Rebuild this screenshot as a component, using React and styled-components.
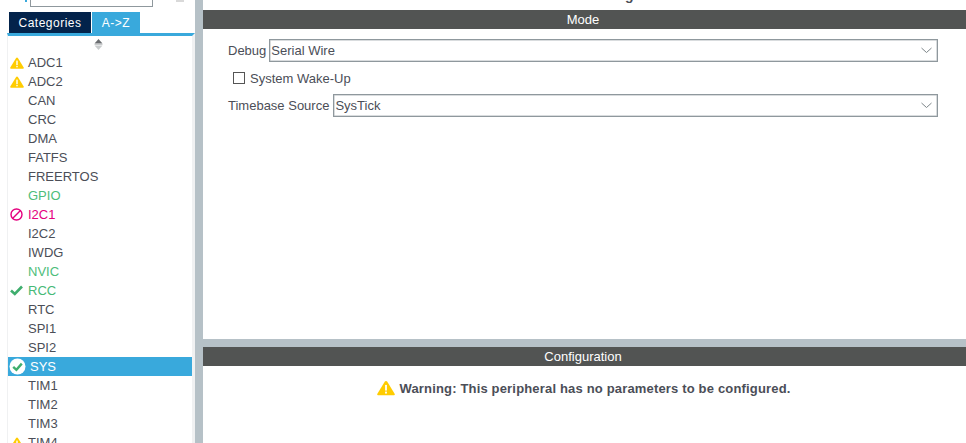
import React from "react"
import styled, { createGlobalStyle } from "styled-components"

const GlobalStyle = createGlobalStyle`
  html, body {
    margin: 0;
    padding: 0;
    background: #fff;
    overflow: hidden;
  }
  body {
    font-family: "Liberation Sans", Arial, sans-serif;
    font-size: 13px;
    color: #4b4e57;
  }
`

const Page = styled.div`
  display: grid;
  grid-template-columns: 195px 8px 1fr;
  width: 966px;
  height: 443px;
  overflow: hidden;
`

const Sidebar = styled.aside`
  display: flex;
  flex-direction: column;
  padding-left: 7px;
  overflow: hidden;
`

const SearchStrip = styled.div`
  display: flex;
  align-items: flex-end;
  flex: 0 0 7px;
  margin-left: -7px;
  overflow: hidden;
`

const SearchMark = styled.span`
  flex: 0 0 2px;
  height: 2px;
  margin: 0 3px 5px 25px;
  background: #39a9dc;
`

const SearchBox = styled.div`
  flex: 0 0 123px;
  height: 20px;
  box-sizing: border-box;
  border: 1px solid #8f989d;
`

const GearStub = styled.span`
  flex: 0 0 8px;
  height: 2px;
  margin: 0 0 5px 23px;
  background: #d9d9d9;
`

const Tabs = styled.div`
  display: flex;
  gap: 1px;
  margin: 5px 0 0 2px;
`

const Tab = styled.div`
  display: flex;
  align-items: center;
  justify-content: center;
  width: ${({ $active }) => ($active ? "48px" : "82px")};
  height: 21px;
  color: #fff;
  font-size: 12px;
  letter-spacing: 0.5px;
  background: ${({ $active }) => ($active ? "#39a9dc" : "#03234b")};
`

const ListBox = styled.div`
  flex: 1;
  min-height: 0;
  border-top: 3px solid #39a9dc;
  border-left: 1px solid #f0f1f2;
  border-right: 3px solid #f0f1f2;
  overflow: hidden;
`

const SortArrows = styled.div`
  display: flex;
  justify-content: center;
  height: 14px;
  padding-top: 3px;
  margin-left: -3px;
`

const List = styled.ul`
  list-style: none;
  margin: 0;
  padding: 0;
`

const stateColor = {
  warn: "#4b4e57",
  ok: "#46b976",
  error: "#e5007e",
  free: "#4dbd7a",
}

const Row = styled.li`
  display: flex;
  align-items: center;
  height: 19px;
  color: ${({ $selected, $state }) =>
    $selected ? "#fff" : stateColor[$state] || "#4b4e57"};
  background: ${({ $selected }) => ($selected ? "#39a9dc" : "transparent")};
`

const IconSlot = styled.span`
  display: flex;
  align-items: center;
  flex: 0 0 ${({ $selected }) => ($selected ? "22px" : "20px")};
  height: 19px;
  padding-left: ${({ $selected }) => ($selected ? "1px" : "2px")};
  box-sizing: border-box;
`

const Splitter = styled.div`
  background: #b6c1c7;
`

const Main = styled.main`
  display: flex;
  flex-direction: column;
  min-width: 0;
`

const TitleStrip = styled.div`
  display: flex;
  align-items: flex-end;
  justify-content: center;
  flex: 0 0 10px;
  overflow: hidden;
`

const Title = styled.div`
  flex: none;
  margin-bottom: 7px;
  font-size: 14px;
  font-weight: 700;
  line-height: 16px;
`

const SectionBar = styled.div`
  flex: 0 0 19px;
  box-sizing: border-box;
  padding: 1px 3px 0 0;
  color: #fff;
  font-size: 13px;
  line-height: 18px;
  text-align: center;
  background: #525453;
`

const ModePanel = styled.section`
  display: flex;
  flex-direction: column;
  flex: 0 0 310px;
  padding: 10px 28px 0 25px;
  box-sizing: border-box;
`

const FieldRow = styled.div`
  display: flex;
  align-items: center;
  gap: ${({ $gap }) => $gap}px;
  height: 23px;
`

const Select = styled.div`
  display: flex;
  align-items: center;
  justify-content: space-between;
  flex: 1;
  height: 23px;
  box-sizing: border-box;
  padding: 0 5px 0 1px;
  border: 1px solid #8f989d;
  box-shadow: inset 0 0 0 0.5px #b4babe;
`

const CheckRow = styled.label`
  display: flex;
  align-items: center;
  gap: 5px;
  height: 32px;
  padding-left: 5px;
`

const CheckBox = styled.span`
  flex: 0 0 12px;
  height: 12px;
  box-sizing: border-box;
  border: 1px solid #555;
`

const HorizontalSplit = styled.div`
  flex: 0 0 8px;
  background: #b6c1c7;
`

const Notice = styled.div`
  display: flex;
  align-items: center;
  justify-content: center;
  gap: 4px;
  height: 44px;
  padding-right: 1px;
  font-weight: 700;
  letter-spacing: 0.17px;
`

const WarnIcon = ({ size = 14 }) => (
  <svg width={size} height={size - 2} viewBox="0 0 14 12">
    <path
      d="M7 .5c.4 0 .7.2.9.5l5.8 9.4c.4.7 0 1.3-.8 1.3H1.1c-.8 0-1.2-.6-.8-1.3L6.1 1c.2-.3.5-.5.9-.5z"
      fill="#ffcc00"
    />
    <rect x="6.3" y="3.6" width="1.4" height="4.4" fill="#fff" />
    <rect x="6.3" y="8.8" width="1.4" height="1.5" fill="#fff" />
  </svg>
)

const BanIcon = () => (
  <svg width="13" height="13" viewBox="0 0 13 13" fill="none" stroke="#e5007e" strokeWidth="1.4">
    <circle cx="6.5" cy="6.5" r="5.5" />
    <path d="M2.8 10.2 10.2 2.8" />
  </svg>
)

const CheckIcon = () => (
  <svg width="13" height="11" viewBox="0 0 13 11" fill="none" stroke="#3fae6e" strokeWidth="2.6">
    <path d="M1 5.5 4.8 9 12 1.5" />
  </svg>
)

const CheckCircleIcon = () => (
  <svg width="17" height="17" viewBox="0 0 17 17" fill="none">
    <circle cx="8.5" cy="8.5" r="8" fill="#fff" />
    <path d="M4.2 8.8 7.4 11.8 12.8 5.6" stroke="#3fae6e" strokeWidth="2.4" />
  </svg>
)

const Chevron = () => (
  <svg width="11" height="7" viewBox="0 0 11 7" fill="none" stroke="#7d8589" strokeWidth="1">
    <path d="M.5 1 5.5 5.5 10.5 1" />
  </svg>
)

const SortIcon = () => (
  <svg width="9" height="11" viewBox="0 0 9 11">
    <path d="M4.5 0 8.5 4.5H.5z" fill="#6a6d70" />
    <path d="M.5 5.5h8" stroke="#c9cccd" strokeWidth="1" />
    <path d="M4.5 11 8.5 6.5H.5z" fill="#c9cccd" />
  </svg>
)

const peripherals = [
  { name: "ADC1", state: "warn" },
  { name: "ADC2", state: "warn" },
  { name: "CAN" },
  { name: "CRC" },
  { name: "DMA" },
  { name: "FATFS" },
  { name: "FREERTOS" },
  { name: "GPIO", state: "free" },
  { name: "I2C1", state: "error" },
  { name: "I2C2" },
  { name: "IWDG" },
  { name: "NVIC", state: "free" },
  { name: "RCC", state: "ok" },
  { name: "RTC" },
  { name: "SPI1" },
  { name: "SPI2" },
  { name: "SYS", state: "ok", selected: true },
  { name: "TIM1" },
  { name: "TIM2" },
  { name: "TIM3" },
  { name: "TIM4", state: "warn" },
]

const rowIcon = ({ state, selected }) => {
  if (selected) return <CheckCircleIcon />
  if (state === "warn") return <WarnIcon />
  if (state === "error") return <BanIcon />
  if (state === "ok") return <CheckIcon />
  return null
}

const App = () => (
  <>
    <GlobalStyle />
    <Page>
      <Sidebar>
        <SearchStrip>
          <SearchMark />
          <SearchBox />
          <GearStub />
        </SearchStrip>
        <Tabs>
          <Tab>Categories</Tab>
          <Tab $active>A-&gt;Z</Tab>
        </Tabs>
        <ListBox>
          <SortArrows>
            <SortIcon />
          </SortArrows>
          <List>
            {peripherals.map((p) => (
              <Row key={p.name} $state={p.state} $selected={p.selected}>
                <IconSlot $selected={p.selected}>{rowIcon(p)}</IconSlot>
                {p.name}
              </Row>
            ))}
          </List>
        </ListBox>
      </Sidebar>
      <Splitter />
      <Main>
        <TitleStrip>
          <Title>SYS Mode and Configuration</Title>
        </TitleStrip>
        <SectionBar>Mode</SectionBar>
        <ModePanel>
          <FieldRow $gap={3}>
            Debug
            <Select>
              Serial Wire
              <Chevron />
            </Select>
          </FieldRow>
          <CheckRow>
            <CheckBox />
            System Wake-Up
          </CheckRow>
          <FieldRow $gap={4}>
            Timebase Source
            <Select>
              SysTick
              <Chevron />
            </Select>
          </FieldRow>
        </ModePanel>
        <HorizontalSplit />
        <SectionBar>Configuration</SectionBar>
        <Notice>
          <WarnIcon size={18} />
          Warning: This peripheral has no parameters to be configured.
        </Notice>
      </Main>
    </Page>
  </>
)

export default App
